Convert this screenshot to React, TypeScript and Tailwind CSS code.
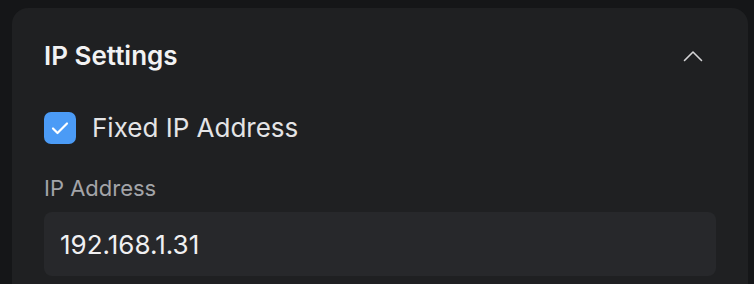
export default function App() {
  return (
    <div
      className="w-[754px] h-[284px] overflow-hidden bg-[#151618] pt-2 pl-3 pr-[6px]"
      style={{ fontFamily: "Inter, 'Noto Sans', sans-serif" }}
    >
      <div className="h-[300px] rounded-t-2xl bg-[#1f2022] px-8 pt-8">
        <div className="flex h-8 items-center justify-between">
          <h2 className="text-[26px] font-semibold leading-8 text-[#f2f2f3]">IP Settings</h2>
          <svg width="20" height="12" viewBox="0 0 20 12" className="mr-[13px]" fill="none">
            <polyline points="1.5,10.5 10,2 18.5,10.5" stroke="#d4d4d6" strokeWidth="1.6" strokeLinecap="round" strokeLinejoin="round" />
          </svg>
        </div>
        <div className="mt-10 flex items-center gap-4">
          <div className="flex h-8 w-8 items-center justify-center rounded-[7px] bg-[#4b9bf6]">
            <svg width="20" height="20" viewBox="0 0 20 20" fill="none">
              <polyline points="3,10.5 7.5,15 17,5.5" stroke="#ffffff" strokeWidth="2.2" strokeLinecap="round" strokeLinejoin="round" />
            </svg>
          </div>
          <span className="text-[26px] leading-8 text-[#e4e4e6]">Fixed IP Address</span>
        </div>
        <div className="mt-[30px] text-[22px] leading-7 text-[#a3a4a8]">IP Address</div>
        <div className="mt-[10px] flex h-16 items-center rounded-lg bg-[#27282b] px-4">
          <span className="text-[26px] text-[#f0f0f2]">192.168.1.31</span>
        </div>
      </div>
    </div>
  );
}
